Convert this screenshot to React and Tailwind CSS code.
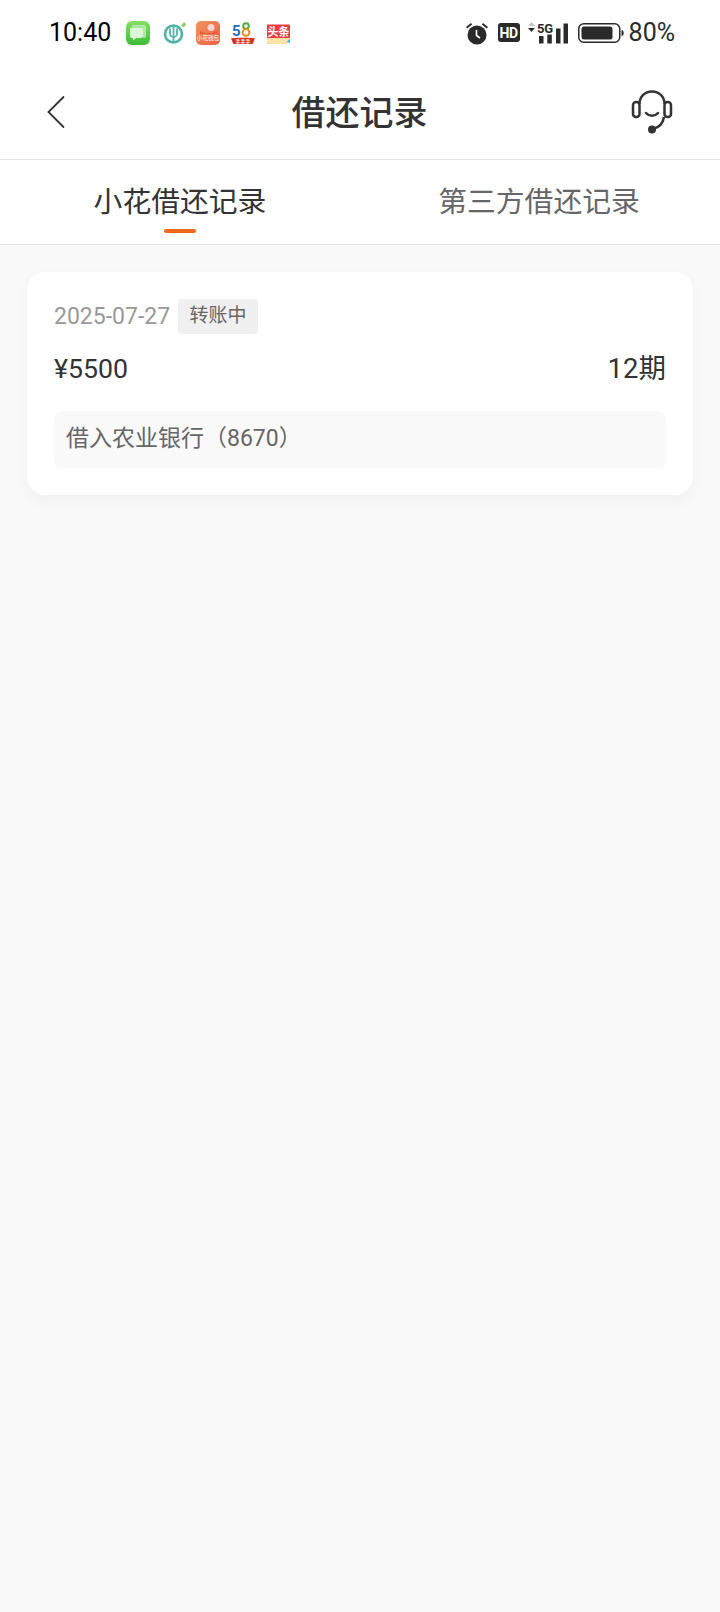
import React from 'react';

// little notification icons in the status bar
const MessageIcon = () => (
  <svg width="24" height="24" viewBox="0 0 24 24">
    <defs>
      <linearGradient id="msgBg" x1="0" y1="0" x2="0" y2="1">
        <stop offset="0" stopColor="#84e065" />
        <stop offset="1" stopColor="#3dbb38" />
      </linearGradient>
    </defs>
    <rect width="24" height="24" rx="6" fill="url(#msgBg)" />
    <path d="M8 4h10a2 2 0 0 1 2 2v9a2 2 0 0 1-2 2h-1V8a2 2 0 0 0-2-2H6a2 2 0 0 1 2-2z" fill="#b2e9a8" />
    <path d="M6 6.500h9a2 2 0 0 1 2 2V15a2 2 0 0 1-2 2H10l-3 2.500V17H6a2 2 0 0 1-2-2V8.500a2 2 0 0 1 2-2z" fill="#dcf5d6" />
  </svg>
);

const BankIcon = () => (
  <svg width="24" height="24" viewBox="0 0 24 24" fill="none" className="overflow-visible">
    <circle cx="12.500" cy="13" r="8.500" stroke="#4fb3a5" strokeWidth="2.600" />
    <path d="M9 7.500v5a3.500 3.500 0 0 0 7 0v-5M12.500 5v16" stroke="#4fb3a5" strokeWidth="1.800" />
    <path d="M20 4.500l3-3.500 2.500 2.500-3 3z" fill="#8fd46a" />
  </svg>
);

const LoanAppIcon = () => (
  <svg width="24" height="24" viewBox="0 0 24 24">
    <defs>
      <linearGradient id="loanBg" x1="0" y1="0" x2="1" y2="1">
        <stop offset="0" stopColor="#f2945f" />
        <stop offset="1" stopColor="#ec6043" />
      </linearGradient>
    </defs>
    <rect width="24" height="24" rx="5" fill="url(#loanBg)" />
    <circle cx="15" cy="6.500" r="3.500" fill="#f9d3cf" />
    <path d="M4 10c5 3 11 3 17 0v3H4z" fill="#e8573d" />
    <text x="12" y="19" textAnchor="middle" fontSize="5.600" fontFamily="'Noto Sans CJK SC', sans-serif" fill="#fff">小花钱包</text>
  </svg>
);

const FiftyEightIcon = () => (
  <svg width="24" height="24" viewBox="0 0 24 24">
    <text x="1" y="15" fontSize="15" fontWeight="700" fontFamily="Roboto, sans-serif" fill="#1f6fc4">5</text>
    <circle cx="15" cy="5" r="2.800" fill="none" stroke="#4fae3c" strokeWidth="2" />
    <circle cx="15" cy="11.500" r="3.400" fill="none" stroke="#f28a1c" strokeWidth="2" />
    <path d="M0 17.500c3-1 21-1 24 0l-2.500 5.500h-19z" fill="#d4301c" />
    <text x="12" y="22" textAnchor="middle" fontSize="5" fontWeight="700" fontFamily="'Noto Sans CJK SC', sans-serif" fill="#fff">手手手</text>
  </svg>
);

const ToutiaoIcon = () => (
  <svg width="24" height="24" viewBox="0 0 24 24">
    <path d="M1 3.500h22a1 1 0 0 1 1 1V19l-4 4H2.500A1.500 1.500 0 0 1 1 21.500z" fill="#ea3b44" />
    <path d="M1 17h23v2l-4 4H2.500A1.500 1.500 0 0 1 1 21.500z" fill="#fbe3a9" />
    <path d="M21 20.500l3-3v5z" fill="#3fb6e8" />
    <text x="12.500" y="14.500" textAnchor="middle" fontSize="11" fontWeight="700" fontFamily="'Noto Sans CJK SC', sans-serif" fill="#fff">头条</text>
  </svg>
);

const AlarmIcon = () => (
  <svg width="22" height="24" viewBox="0 0 22 24" fill="#2a2a2a">
    <circle cx="11" cy="14" r="9.500" />
    <path d="M0 6l5-4 1.200 1.400-5 4zM22 6l-5-4-1.200 1.400 5 4z" />
    <path d="M10.500 9v5.500l3.500 2.500" stroke="#fff" strokeWidth="1.600" fill="none" />
  </svg>
);

const HdIcon = () => (
  <div className="flex h-[19px] w-[22px] items-center justify-center rounded-[3px] bg-[#2a2a2a] text-[14px] font-bold leading-none tracking-[-0.5px] text-white">
    HD
  </div>
);

const SignalIcon = () => (
  <svg width="42" height="24" viewBox="0 0 42 24" fill="#2a2a2a">
    <path d="M2 5l3.500-4L9 5z" fill="#c4c4c4" />
    <path d="M2 7h7l-3.500 4z" />
    <text x="11" y="12" fontSize="13" fontWeight="700" fontFamily="Roboto, sans-serif" letterSpacing="-0.3">5G</text>
    <rect x="13" y="15" width="4.500" height="7.500" />
    <rect x="21.300" y="13.500" width="4.500" height="9" />
    <rect x="30" y="7.500" width="4.500" height="15" />
    <rect x="37.500" y="2.500" width="4.500" height="20" />
  </svg>
);

const BatteryIcon = () => (
  <svg width="46" height="20" viewBox="0 0 46 20">
    <rect x="0.750" y="0.750" width="41" height="18.500" rx="5" fill="none" stroke="#2a2a2a" strokeWidth="1.500" />
    <rect x="3.500" y="3.500" width="31" height="13" rx="2.500" fill="#2a2a2a" />
    <path d="M43.500 7c1.500.3 2.200 1.200 2.200 3s-.7 2.700-2.200 3z" fill="#2a2a2a" />
  </svg>
);

const StatusBar = () => (
  <div className="flex h-[64px] items-center justify-between bg-white pl-[49px] pr-[45px] pt-[1px]">
    <div className="flex items-center">
      <span className="text-[25px] leading-none text-black">10:40</span>
      <div className="ml-[15px] flex items-center gap-[11px]">
        <MessageIcon />
        <BankIcon />
        <LoanAppIcon />
        <FiftyEightIcon />
        <ToutiaoIcon />
      </div>
    </div>
    <div className="flex items-center">
      <AlarmIcon />
      <div className="ml-[10px]"><HdIcon /></div>
      <div className="ml-[6px]"><SignalIcon /></div>
      <div className="ml-[10px]"><BatteryIcon /></div>
      <span className="ml-[5px] text-[25px] leading-none text-[#2a2a2a]">80%</span>
    </div>
  </div>
);

const NavBar = () => (
  <div className="flex h-[96px] items-center justify-between border-b border-[#e4e4e4] bg-white pl-[46px] pr-[47px]">
    <div className="w-[42px]">
      <svg width="20" height="34" viewBox="0 0 20 34" fill="none" stroke="#333" strokeWidth="1.800">
        <path d="M18 1.500L2.500 17 18 32.500" />
      </svg>
    </div>
    <h1 className="pt-[2px] text-[34px] font-medium leading-none text-[#333]">借还记录</h1>
    <svg width="42" height="44" viewBox="0 0 42 44" fill="none" stroke="#333" strokeWidth="2.500">
      <path d="M8.500 14C8.500 6.500 14 1.500 21 1.500S33.500 6.500 33.500 14" />
      <rect x="2" y="12" width="6.500" height="15" rx="3" />
      <rect x="33.500" y="12" width="6.500" height="15" rx="3" />
      <path d="M15 23c3 3.500 9 3.500 12 0" strokeLinecap="round" />
      <path d="M33 27c-1 6-5 10.500-11 12" />
      <circle cx="21" cy="39.500" r="4" fill="#333" stroke="none" />
    </svg>
  </div>
);

const Tabs = () => (
  <div className="flex h-[85px] border-b border-[#e0e0e0] bg-white">
    <div className="relative flex w-[360px] justify-center pt-[22px]">
      <span className="text-[28.800px] leading-[40px] text-[#333]">小花借还记录</span>
      <div className="absolute bottom-[11px] left-[164px] h-[4px] w-[32px] rounded-full bg-[#ee6a1a]" />
    </div>
    <div className="flex w-[360px] justify-center pr-[2px] pt-[22px]">
      <span className="text-[28.800px] leading-[40px] text-[#666]">第三方借还记录</span>
    </div>
  </div>
);

const RecordCard = () => (
  <div className="mx-[27px] mt-[27px] rounded-[18px] bg-white px-[27px] pb-[27px] pt-[27px] shadow-[0_6px_16px_rgba(0,0,0,0.04)]">
    <div className="flex items-center">
      <span className="text-[23px] leading-none text-[#999]">2025-07-27</span>
      <span className="ml-[8px] flex h-[35px] w-[80px] items-center justify-center rounded-[4px] bg-[#f0f0f0] text-[19px] text-[#666]">转账中</span>
    </div>
    <div className="mt-[17px] flex items-center justify-between text-[26.700px] leading-[36px] text-[#333]">
      <span>¥5500</span>
      <span className="text-[27.500px]">12期</span>
    </div>
    <div className="mt-[24px] flex h-[57px] items-center rounded-[8px] bg-[#f9f9f9] px-[12px] text-[23px] text-[#666] shadow-[0_3px_6px_rgba(0,0,0,0.015)]">
      借入农业银行（8670）
    </div>
  </div>
);

export default function App() {
  return (
    <div className="min-h-[1612px] bg-[#f9f9f9] font-['Roboto','Noto_Sans_CJK_SC',sans-serif]">
      <StatusBar />
      <NavBar />
      <Tabs />
      <RecordCard />
    </div>
  );
}
